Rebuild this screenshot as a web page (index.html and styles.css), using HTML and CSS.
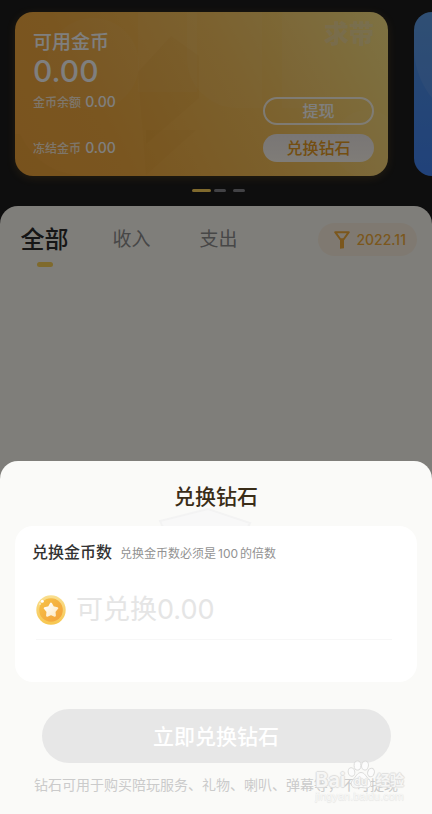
FILE: index.html
```html
<!DOCTYPE html>
<html lang="zh-CN">
<head>
<meta charset="utf-8">
<meta name="viewport" content="width=device-width, initial-scale=1">
<title>兑换钻石</title>
<link rel="stylesheet" href="styles.css">
</head>
<body>
<main class="wallet">
  <section class="cards">
    <article class="card card-gold">
      <svg class="card-art" viewBox="0 0 373 164" preserveAspectRatio="none" aria-hidden="true">
        <g fill="#fff" fill-opacity=".035">
          <circle cx="78" cy="52" r="46"/>
          <path d="M123 0h59v80h-59z"/>
          <path d="M172 0h75v96h-25a50 50 0 0 1-50-50z"/>
          <path d="M267 0h48v96h-48z"/>
          <circle cx="352" cy="132" r="34"/>
        </g>
        <g fill="#c87800" fill-opacity=".05">
          <path d="M123 60l33-36 28 20v42l-53 46v31z"/>
          <path d="M131 118l50 0-50 45z"/>
          <path d="M5 122q20 42 70 42h-75v-42z"/>
        </g>
      </svg>
      <div class="balances">
        <h2 class="card-title">可用金币</h2>
        <p class="total">0.00</p>
        <p class="line">金币余额 <b>0.00</b></p>
        <p class="line line-last">冻结金币 <b>0.00</b></p>
      </div>
      <div class="card-side">
        <span class="brand">求带</span>
        <div class="card-actions">
          <button class="pill pill-outline" type="button">提现</button>
          <button class="pill pill-solid" type="button">兑换钻石</button>
        </div>
      </div>
    </article>
    <article class="card card-blue">
      <svg class="card-art" viewBox="0 0 18 164" preserveAspectRatio="none" aria-hidden="true">
        <path d="M0 0h18v86Q2 66 0 40z" fill="#fff" fill-opacity=".08"/>
      </svg>
    </article>
  </section>
  <div class="dots"><i class="dot dot-on"></i><i class="dot"></i><i class="dot"></i></div>
  <section class="records">
    <nav class="tabs">
      <a class="tab tab-on" href="#all">全部</a>
      <a class="tab" href="#income">收入</a>
      <a class="tab" href="#spend">支出</a>
    </nav>
    <button class="filter" type="button">
      <svg width="16" height="18" viewBox="0 0 16 18" aria-hidden="true">
        <path d="M1.2 1.2h13.6L9.500 8.500h-3z" fill="none" stroke="currentColor" stroke-width="2" stroke-linejoin="round"/>
        <path d="M6 7.500h4v9.700l-4 .5z" fill="currentColor"/>
      </svg>
      2022.11
    </button>
  </section>
</main>

<div class="scrim"></div>

<section class="sheet" role="dialog" aria-labelledby="sheet-title">
  <svg class="sheet-art" width="96" height="40" viewBox="0 0 96 40" aria-hidden="true">
    <path d="M2 13L50 1l42 14-12 24H14z" fill="#f8f8f8" stroke="#f3f3f3" stroke-width="2"/>
  </svg>
  <h1 class="sheet-title" id="sheet-title">兑换钻石</h1>
  <form class="exchange" id="exchange">
    <div class="exchange-head">
      <label class="exchange-label" for="amount">兑换金币数</label>
      <span class="hint">兑换金币数必须是<span class="num">100</span>的倍数</span>
    </div>
    <div class="amount-row">
      <svg class="coin" width="30" height="30" viewBox="0 0 30 30" aria-hidden="true">
        <defs>
          <linearGradient id="rim" x1="0" y1="0" x2="0" y2="1"><stop offset="0" stop-color="#f9df91"/><stop offset="1" stop-color="#f7c64e"/></linearGradient>
          <linearGradient id="face" x1="0" y1="0" x2="1" y2="1"><stop offset="0" stop-color="#f6c248"/><stop offset="1" stop-color="#f3a03a"/></linearGradient>
          <linearGradient id="star" x1="0" y1="0" x2="1" y2="1"><stop offset="0" stop-color="#fff"/><stop offset="1" stop-color="#fde9c4"/></linearGradient>
        </defs>
        <circle cx="15" cy="15" r="14.7" fill="url(#rim)"/>
        <circle cx="15" cy="15" r="11.800" fill="url(#face)"/>
        <path d="M15 8.500l2.100 3.700 4.200 1-2.800 3.300.4 4.200-3.900-1.600-3.900 1.600.4-4.200-2.800-3.300 4.200-1z" fill="url(#star)" stroke="url(#star)" stroke-width="2" stroke-linejoin="round"/>
        <circle cx="6.300" cy="6.200" r="1.500" fill="#fff"/><circle cx="4" cy="9" r=".7" fill="#fff"/>
      </svg>
      <input class="amount" id="amount" type="text" inputmode="decimal" placeholder="可兑换0.00">
    </div>
  </form>
  <button class="submit" type="submit" form="exchange">立即兑换钻石</button>
  <p class="note">钻石可用于购买陪玩服务、礼物、喇叭、弹幕等，不可提现</p>
  <div class="stamp">
    <div class="stamp-top">
      <span class="stamp-bai">Bai</span>
      <span class="stamp-paw">
        <svg width="28" height="30" viewBox="0 0 28 30" aria-hidden="true">
          <g fill="#fdfdfc" fill-opacity=".8" stroke="#dcdcdb" stroke-width="1">
            <ellipse cx="4.500" cy="12" rx="3.300" ry="4.300" transform="rotate(-12 4.500 12)"/>
            <ellipse cx="10.500" cy="5.500" rx="3.400" ry="4.600"/>
            <ellipse cx="18" cy="5.500" rx="3.400" ry="4.600" transform="rotate(8 18 5.500)"/>
            <ellipse cx="24" cy="12.500" rx="3.300" ry="4.300" transform="rotate(15 24 12.500)"/>
            <path d="M14 12.500c3.500 0 5 4 7.500 6.500 4 4 2.500 9-2.500 9-2 0-3-.5-5-.5s-3 .5-5 .5c-5 0-6.500-5-2.500-9 2.500-2.500 4-6.500 7.500-6.500z"/>
          </g>
        </svg>
        <span class="stamp-du">du</span>
      </span>
      <span class="stamp-jy">经验</span>
    </div>
    <div class="stamp-url">jingyan.baidu.com</div>
  </div>
</section>
</body>
</html>
```
FILE: styles.css
```css
* { box-sizing: border-box; }

html, body { height: 100%; }

body {
  margin: 0;
  position: relative;
  overflow: hidden;
  background: #1c1c1c;
  font-family: Inter, "Noto Sans CJK SC", sans-serif;
}

h1, h2, p { margin: 0; font-weight: 500; }

button, input { font-family: inherit; margin: 0; }

.wallet {
  display: flex;
  flex-direction: column;
  height: 100%;
  padding-top: 12px;
}

.cards {
  display: flex;
  flex: none;
  gap: 26px;
  padding-left: 15px;
}

.card {
  position: relative;
  display: flex;
  min-height: 164px;
  overflow: hidden;
}

.card-gold {
  flex: 0 0 calc(100% - 44px);
  justify-content: space-between;
  padding: 14px 14px 14px 18px;
  border-radius: 18px;
  background: linear-gradient(62deg, #f4a83e 0%, #f4ac40 25%, #f8c25a 60%, #fce486 100%);
  box-shadow: 0 2px 8px rgba(250, 180, 60, 0.2);
}

.card-blue {
  flex: 1;
  border-radius: 18px 0 0 18px;
  background: linear-gradient(#5296e6, #4284f4);
}

.card-art {
  position: absolute;
  inset: 0;
  width: 100%;
  height: 100%;
}

.balances, .card-side {
  position: relative;
  display: flex;
  flex-direction: column;
  color: #fff;
}

.card-title { margin-top: 3px; font-size: 19px; line-height: 28px; }

.total { font-size: 30px; line-height: 28px; font-weight: 500; }

.line { margin-top: 7px; font-size: 12px; line-height: 20px; color: rgba(255, 255, 255, 0.8); }

.line b { margin-left: 1px; font-size: 14px; font-weight: 500; color: #fff; }

.line-last { margin-top: 25px; }

.card-side { align-items: flex-end; justify-content: space-between; }

.brand {
  font-size: 25px;
  line-height: 16px;
  font-weight: 900;
  color: rgba(225, 225, 235, 0.3);
}

.card-actions { display: flex; flex-direction: column; gap: 9px; width: 111px; }

.pill {
  height: 28px;
  padding: 0;
  border: 0;
  border-radius: 14px;
  font-size: 16px;
  line-height: 24px;
  font-weight: 500;
}

.pill-outline { border: 2px solid rgba(255, 255, 255, 0.85); background: transparent; color: #fff; }

.pill-solid { background: linear-gradient(#f2ecea, #fff9f0); color: #e89c22; }

.dots { display: flex; flex: none; justify-content: center; gap: 7px; padding: 13px 0 14px 4px; }

.dot { width: 12px; height: 3px; border-radius: 2px; background: #84848a; }

.dot-on { width: 19px; margin-right: -4px; background: #ffd35a; }

.records {
  display: flex;
  flex: 1;
  align-items: flex-start;
  justify-content: space-between;
  padding: 17px 15px 0 1px;
  border-radius: 18px 18px 0 0;
  background: #fffcf5;
}

.tabs { display: flex; align-items: center; }

.tab {
  width: 87px;
  font-size: 19px;
  line-height: 34px;
  color: #8e8e8e;
  text-align: center;
  text-decoration: none;
}

.tab-on { position: relative; font-size: 24px; font-weight: 500; color: #2c2c2c; }

.tab-on::after {
  content: "";
  position: absolute;
  top: 39px;
  left: calc(50% - 8px);
  width: 16px;
  height: 5px;
  border-radius: 3px;
  background: #ffd458;
}

.filter {
  display: flex;
  align-items: center;
  gap: 6px;
  height: 33px;
  padding: 0 11px 0 16px;
  border: 0;
  border-radius: 17px;
  background: #fff3e2;
  color: #f6ae3a;
  font-size: 14px;
  font-weight: 500;
}

.scrim { position: absolute; inset: 0; background: rgba(0, 0, 0, 0.5); }

.sheet {
  position: absolute;
  right: 0;
  bottom: 0;
  left: 0;
  padding: 21px 15px 19px;
  border-radius: 18px 18px 0 0;
  background: #fafaf8;
  text-align: center;
}

.sheet-art { position: absolute; top: 47px; left: calc(50% - 58px); }

.sheet-title { position: relative; font-size: 21px; line-height: 30px; color: #3a2d18; }

.exchange {
  position: relative;
  min-height: 156px;
  margin-top: 14px;
  padding: 14px 17px;
  border-radius: 18px;
  background: #fff;
}

.exchange-head { display: flex; align-items: baseline; gap: 8px; }

.exchange-label { font-size: 16px; line-height: 24px; font-weight: 500; color: #333; }

.hint { font-size: 12px; color: #929292; }

.num { margin: 0 2px; }

.amount-row {
  display: flex;
  align-items: center;
  gap: 10px;
  margin: 17px 8px 0 4px;
  border-bottom: 1px solid #f7f7f7;
  height: 59px;
}

.coin { flex: none; }

.amount {
  flex: 1;
  min-width: 0;
  padding: 0;
  border: 0;
  outline: 0;
  background: transparent;
  font-size: 27px;
  line-height: 40px;
  color: #333;
}

.amount::placeholder { color: #e5e5e5; opacity: 1; }

.submit {
  display: block;
  width: calc(100% - 53px);
  height: 54px;
  margin: 27px auto 0;
  padding: 0 0 2px;
  border: 0;
  border-radius: 27px;
  background: #e7e7e7;
  color: #fff;
  font-size: 21px;
  font-weight: 500;
}

.note { margin-top: 11px; font-size: 14px; line-height: 21px; font-weight: 400; color: #cbcbcb; white-space: nowrap; }

.stamp {
  position: absolute;
  right: 28px;
  bottom: 11px;
  color: rgba(253, 253, 252, 0.8);
  text-shadow: 1px 0 1px #dededd, -1px 0 1px #dededd, 0 1px 1px #dededd, 0 -1px 1px #dededd;
}

.stamp-top { display: flex; align-items: flex-end; justify-content: space-between; }

.stamp-bai { font-size: 20px; line-height: 20px; font-weight: 600; }

.stamp-paw { position: relative; display: flex; }

.stamp-du { position: absolute; right: 0; bottom: 3px; left: 0; font-size: 11px; line-height: 12px; font-weight: 500; }

.stamp-jy { font-size: 14px; line-height: 20px; font-weight: 700; }

.stamp-url {
  font-family: "Liberation Sans", sans-serif;
  font-size: 11px;
  line-height: 13px;
  text-shadow: 0 0 1px #dededd, 0 1px 1px #e6e6e5;
}
```
